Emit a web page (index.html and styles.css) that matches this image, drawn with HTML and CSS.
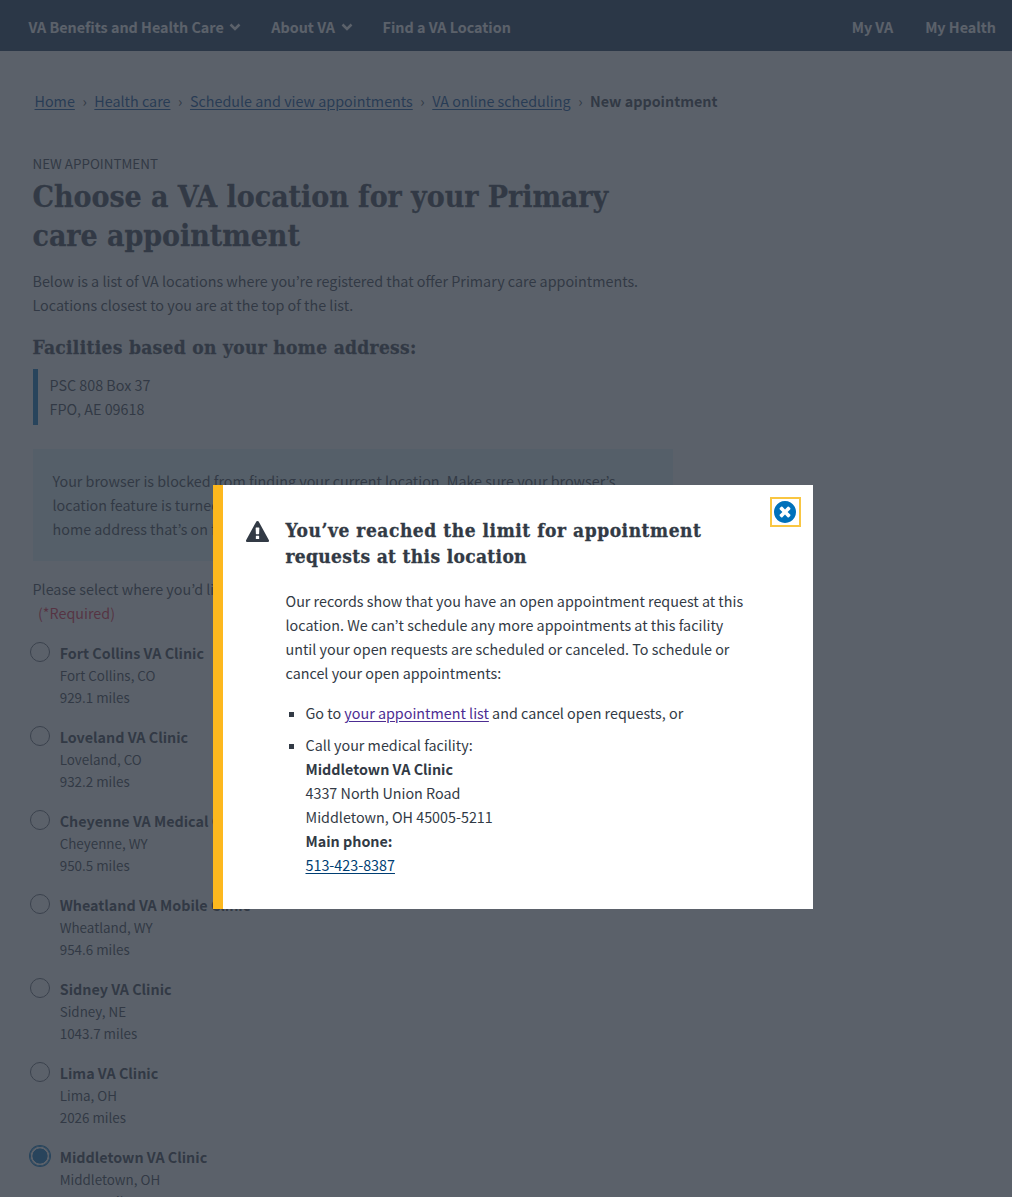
FILE: index.html
```html
<!DOCTYPE html>
<html lang="en">
<head>
<meta charset="utf-8">
<title>New appointment</title>
<link rel="stylesheet" href="styles.css">
</head>
<body>
<header class="nav">
  <a class="nav-item">VA Benefits and Health Care <svg class="chevron" viewBox="0 0 12 8"><path d="M1.500 1.500 6 6l4.500-4.500"/></svg></a>
  <a class="nav-item">About VA <svg class="chevron" viewBox="0 0 12 8"><path d="M1.500 1.500 6 6l4.500-4.500"/></svg></a>
  <a class="nav-item">Find a VA Location</a>
  <span class="nav-right"><a class="nav-item">My VA</a><a class="nav-item">My Health</a></span>
</header>
<nav class="crumbs">
  <a class="link">Home</a><span class="sep">›</span><a class="link">Health care</a><span class="sep">›</span><a class="link">Schedule and view appointments</a><span class="sep">›</span><a class="link">VA online scheduling</a><span class="sep">›</span><strong>New appointment</strong>
</nav>
<main class="content">
  <div class="eyebrow">NEW APPOINTMENT</div>
  <h1 class="title">Choose a VA location for your Primary<br>care appointment</h1>
  <p class="intro">Below is a list of VA locations where you’re registered that offer Primary care appointments.<br>Locations closest to you are at the top of the list.</p>
  <h2 class="subtitle">Facilities based on your home address:</h2>
  <div class="address">PSC 808 Box 37<br>FPO, AE 09618</div>
  <div class="notice">Your browser is blocked from finding your current location. Make sure your browser’s<br>location feature is turned on. If you can’t turn it on, we’ll use the<br>home address that’s on file.</div>
  <div class="question">Please select where you’d like<div class="required">(*Required)</div></div>
  <ul class="facilities">
    <li class="facility"><span class="radio"></span><div><strong class="name">Fort Collins VA Clinic</strong><div class="meta">Fort Collins, CO<br>929.1 miles</div></div></li>
    <li class="facility"><span class="radio"></span><div><strong class="name">Loveland VA Clinic</strong><div class="meta">Loveland, CO<br>932.2 miles</div></div></li>
    <li class="facility"><span class="radio"></span><div><strong class="name">Cheyenne VA Medical Center</strong><div class="meta">Cheyenne, WY<br>950.5 miles</div></div></li>
    <li class="facility"><span class="radio"></span><div><strong class="name">Wheatland VA Mobile Clinic</strong><div class="meta">Wheatland, WY<br>954.6 miles</div></div></li>
    <li class="facility"><span class="radio"></span><div><strong class="name">Sidney VA Clinic</strong><div class="meta">Sidney, NE<br>1043.7 miles</div></div></li>
    <li class="facility"><span class="radio"></span><div><strong class="name">Lima VA Clinic</strong><div class="meta">Lima, OH<br>2026 miles</div></div></li>
    <li class="facility"><span class="radio checked"></span><div><strong class="name">Middletown VA Clinic</strong><div class="meta">Middletown, OH<br>2078.4 miles</div></div></li>
  </ul>
</main>
<div class="overlay">
  <section class="modal" role="dialog">
    <svg class="warning" viewBox="0 0 1792 1664"><path d="M1024 1375v-190q0-14-9.500-23.500t-22.500-9.500h-192q-13 0-22.500 9.500t-9.500 23.500v190q0 14 9.500 23.500t22.500 9.500h192q13 0 22.500-9.500t9.500-23.500zm-2-374l18-459q0-12-10-19-13-11-24-11h-220q-11 0-24 11-10 7-10 21l17 457q0 10 10 16.500t24 6.500h185q14 0 23.500-6.500t10.500-16.500zm-14-934l768 1408q35 63-2 126-17 29-46.500 46t-63.500 17h-1536q-34 0-63.500-17t-46.500-46q-37-63-2-126l768-1408q17-31 47-49t65-18 65 18 47 49z"/></svg>
    <div class="modal-body">
      <h2 class="modal-title"><span class="wide">You’ve reached the limit for appointment</span><br>requests at this location</h2>
      <p class="modal-text">Our records show that you have an open appointment request at this<br>location. We can’t schedule any more appointments at this facility<br>until your open requests are scheduled or canceled. To schedule or<br>cancel your open appointments:</p>
      <ul class="steps">
        <li class="step">Go to <a class="link visited">your appointment list</a> and cancel open requests, or</li>
        <li class="step">Call your medical facility:<br><strong>Middletown VA Clinic</strong><br>4337 North Union Road<br>Middletown, OH 45005-5211<br><strong>Main phone:</strong><br><a class="link phone">513-423-8387</a></li>
      </ul>
    </div>
    <button class="close" aria-label="Close"><svg class="close-icon" viewBox="128 128 1536 1536"><path d="M1277 1122q0-26-19-45l-181-181 181-181q19-19 19-45 0-27-19-46l-90-90q-19-18-46-18-26 0-45 18l-181 181-181-181q-19-18-45-18-27 0-46 18l-90 90q-18 19-18 46 0 26 18 45l181 181-181 181q-18 19-18 45 0 27 18 46l90 90q19 18 46 18 26 0 45-18l181-181 181 181q19 18 45 18 27 0 46-18l90-90q19-19 19-46zm387-226q0 209-103 385.500t-279.500 279.500-385.500 103-385.500-103-279.500-279.500-103-385.500 103-385.500 279.500-279.500 385.500-103 385.500 103 279.500 279.500 103 385.500z"/></svg></button>
  </section>
</div>
</body>
</html>
```
FILE: styles.css
```css
* { box-sizing: border-box; }
body {
  margin: 0;
  height: 1197px;
  overflow: hidden;
  background: #fff;
  color: #323a45;
  font: 14.33px/24px "Noto Sans CJK KR", "Open Sans", sans-serif;
}
h1, h2, p, ul { margin: 0; padding: 0; }
ul { list-style: none; }
.nav {
  display: flex;
  gap: 30px;
  height: 51px;
  padding: 15px 16px 0 28.500px;
  background: #112e51;
  color: #fff;
  font-weight: 700;
}
.nav-item { display: flex; align-items: center; gap: 5.600px; height: 24px; white-space: nowrap; }
.nav-right { display: flex; gap: 32px; margin-left: auto; }
.chevron { width: 12px; height: 8px; fill: none; stroke: #fff; stroke-width: 2.500; }
.crumbs { display: flex; padding: 38px 0 0 34.500px; white-space: nowrap; }
.link { color: #004795; text-decoration: underline; text-underline-offset: 2px; }
.sep { width: 19.500px; text-align: center; }
.content { width: 673px; padding: 38px 0 0 32.500px; white-space: nowrap; }
.eyebrow { font-size: 13.400px; }
.title, .subtitle, .modal-title {
  font-family: "DejaVu Serif Condensed", "DejaVu Serif", serif;
  font-stretch: condensed;
  font-weight: 700;
  -webkit-text-stroke: .3px #323a45;
}
.title { padding-top: 2px; font-size: 30px; line-height: 39px; letter-spacing: -.05px; }
.intro { margin-top: 14px; }
.subtitle { margin-top: 17px; font-size: 19px; line-height: 26px; letter-spacing: .32px; }
.address { height: 56px; margin-top: 9px; padding: 4px 0 0 12px; border-left: 5px solid #0071bb; }
.notice { height: 112px; margin-top: 24px; padding: 20px; background: #e1f3f8; }
.question { margin-top: 16px; }
.required { padding-left: 5.500px; color: #e31c3d; }
.facilities { margin-top: 16px; }
.facility { display: flex; gap: 10px; height: 84px; margin-left: -2.800px; }
.radio { width: 20px; height: 20px; margin-top: 1px; border: 1px solid #5b616b; border-radius: 50%; flex: none; }
.checked {
  border: none;
  background: radial-gradient(circle, #0071bb 7.300px, #fff 7.800px, #fff 9px, #0071bb 9.500px);
  box-shadow: 0 0 0 1px #0071bb;
}
.name { display: block; }
.meta { margin-top: -1px; font-size: 13.400px; line-height: 22px; }
.overlay { position: fixed; inset: 0; padding: 485px 0 0 213px; background: rgba(50, 58, 69, .8); }
.modal {
  position: relative;
  display: flex;
  width: 600px;
  height: 424px;
  padding: 32px 30px 32px 23px;
  border-left: 10px solid #fdb81e;
  background: #fff;
  white-space: nowrap;
}
.warning { width: 23px; height: 21.400px; margin: 4px 16.500px 0 0; flex: none; fill: #323a45; }
.modal-title { font-size: 19px; line-height: 26px; letter-spacing: .33px; }
.wide { letter-spacing: .54px; }
.modal-text { margin-top: 20px; }
.steps { margin-top: 16px; padding-left: 20px; }
.step { position: relative; margin-bottom: 8px; }
.step::before { content: ""; position: absolute; left: -16.500px; top: 11px; width: 5px; height: 5px; background: #323a45; }
.visited { color: #4c2c92; }
.phone { color: #003e73; }
.close {
  position: absolute;
  top: 12px;
  right: 12px;
  display: flex;
  align-items: center;
  justify-content: center;
  width: 31px;
  height: 30px;
  padding: 0 1px 1px 0;
  border: 2px solid #f9c642;
  background: none;
}
.close-icon { width: 22px; height: 22px; flex: none; fill: #0071bb; }
```
